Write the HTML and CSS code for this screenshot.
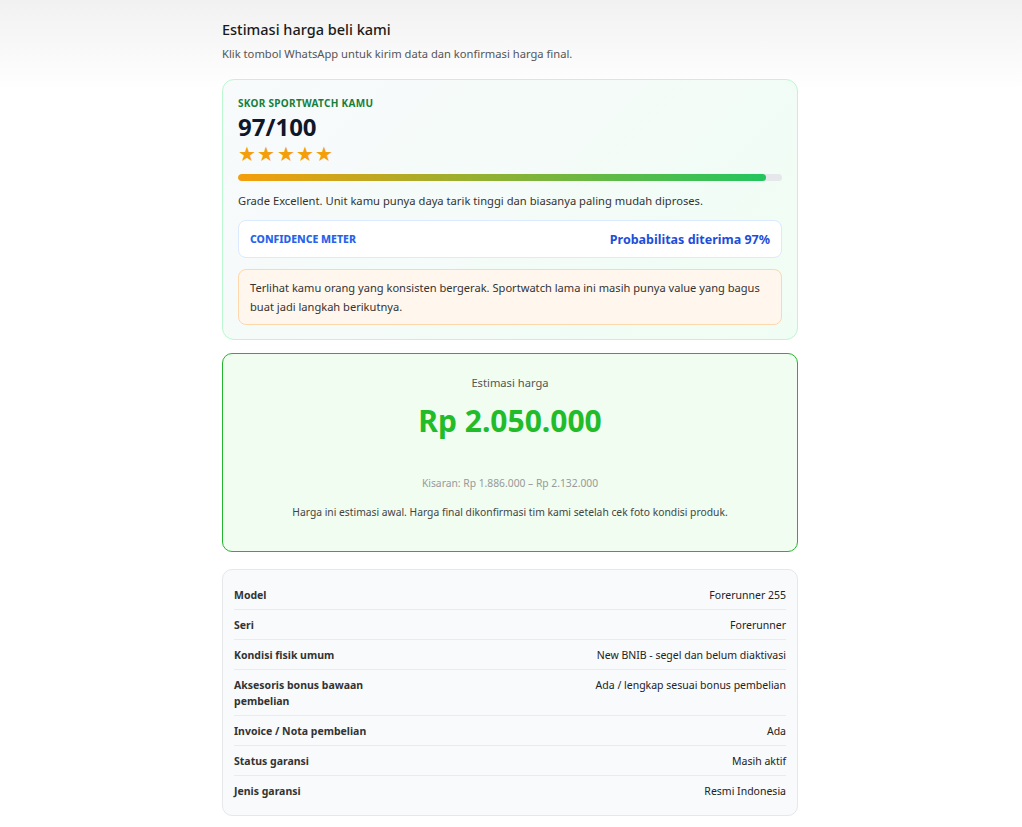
FILE: index.html
```html
<!DOCTYPE html>
<html lang="id">
<head>
    <meta charset="UTF-8">
    <meta name="viewport" content="width=device-width, initial-scale=1.0">
    <title>Estimasi harga beli kami</title>
    <link rel="stylesheet" href="styles.css">
</head>
<body>

<div class="container">
    <h1>Estimasi harga beli kami</h1>
    <p class="subtitle">Klik tombol WhatsApp untuk kirim data dan konfirmasi harga final.</p>

    <div class="score-card">
        <div class="score-label">Skor Sportwatch Kamu</div>
        <div class="score-value">97/100</div>
        <div class="stars">★★★★★</div>
        <div class="bar"><div class="bar-fill" style="width: 97%"></div></div>
        <p class="grade">Grade Excellent. Unit kamu punya daya tarik tinggi dan biasanya paling mudah diproses.</p>

        <div class="confidence">
            <span class="confidence-label">Confidence Meter</span>
            <span class="confidence-value">Probabilitas diterima 97%</span>
        </div>

        <div class="note">
            Terlihat kamu orang yang konsisten bergerak. Sportwatch lama ini masih punya value yang bagus buat jadi langkah berikutnya.
        </div>
    </div>

    <div class="price-card">
        <div class="price-label">Estimasi harga</div>
        <div class="price">Rp 2.050.000</div>
        <div class="range">Kisaran: Rp 1.886.000 – Rp 2.132.000</div>
        <div class="disclaimer">Harga ini estimasi awal. Harga final dikonfirmasi tim kami setelah cek foto kondisi produk.</div>
    </div>

    <div class="details">
        <div class="row"><span class="key">Model</span><span class="val">Forerunner 255</span></div>
        <div class="row"><span class="key">Seri</span><span class="val">Forerunner</span></div>
        <div class="row"><span class="key">Kondisi fisik umum</span><span class="val">New BNIB - segel dan belum diaktivasi</span></div>
        <div class="row"><span class="key">Aksesoris bonus bawaan pembelian</span><span class="val">Ada / lengkap sesuai bonus pembelian</span></div>
        <div class="row"><span class="key">Invoice / Nota pembelian</span><span class="val">Ada</span></div>
        <div class="row"><span class="key">Status garansi</span><span class="val">Masih aktif</span></div>
        <div class="row"><span class="key">Jenis garansi</span><span class="val">Resmi Indonesia</span></div>
    </div>
</div>

</body>
</html>
```

FILE: styles.css
```css
body {
    margin: 0;
    padding: 18px 2px 12px 0;
    font-family: "Noto Sans", "Open Sans", sans-serif;
    color: #222;
    background: linear-gradient(#f1f1f1 0, #ffffff 90px) no-repeat;
    background-color: #fff;
}
.container {
    width: 576px;
    margin: 0 auto;
}
h1 {
    margin: 0;
    font-size: 14.5px;
    font-weight: 500;
    color: #1a1a1a;
    line-height: 22px;
}
.subtitle {
    margin: 6px 0 17px;
    font-size: 11.2px;
    color: #555;
    line-height: 16px;
}
.score-card {
    border: 1px solid #bbf7d0;
    border-radius: 12px;
    background: linear-gradient(135deg, #f8fafc, #f0fdf4);
    padding: 16px 15px 14px;
}
.score-label {
    font-size: 10px;
    font-weight: 700;
    color: #15803d;
    text-transform: uppercase;
    letter-spacing: 0.3px;
    line-height: 14px;
}
.score-value {
    font-size: 24px;
    font-weight: 700;
    color: #0f172a;
    line-height: 30px;
    margin-top: 2px;
}
.stars {
    color: #f59e0b;
    font-size: 20px;
    letter-spacing: 1.3px;
    line-height: 20px;
    margin-top: 2px;
}
.bar {
    margin-top: 10px;
    height: 7px;
    background: #e5e7eb;
    border-radius: 4px;
    overflow: hidden;
}
.bar-fill {
    height: 100%;
    border-radius: 4px;
    background: linear-gradient(90deg, #f59e0b, #22c55e);
}
.grade {
    margin: 12px 0 11px;
    font-size: 11.2px;
    color: #333;
    line-height: 16px;
}
.confidence {
    display: flex;
    justify-content: space-between;
    align-items: center;
    height: 36px;
    padding: 0 11px;
    background: #fff;
    border: 1px solid #dbeafe;
    border-radius: 8px;
}
.confidence-label {
    font-size: 10.5px;
    font-weight: 800;
    color: #2563eb;
    text-transform: uppercase;
}
.confidence-value {
    font-size: 12.5px;
    font-weight: 700;
    color: #1d4ed8;
}
.note {
    margin-top: 11px;
    padding: 8px 11px;
    background: #fff7ed;
    border: 1px solid #fed7aa;
    border-radius: 8px;
    font-size: 11.1px;
    line-height: 19px;
    color: #333;
}
.price-card {
    margin-top: 13px;
    border: 1px solid #22b52f;
    border-radius: 10px;
    background: #f0fdf0;
    text-align: center;
    padding: 21px 16px 32px;
}
.price-label {
    font-size: 11.2px;
    color: #555;
    line-height: 16px;
}
.price {
    margin-top: 12px;
    font-size: 30px;
    font-weight: 700;
    color: #22bb2a;
    line-height: 36px;
}
.range {
    margin-top: 37px;
    font-size: 10.3px;
    color: #999;
    line-height: 14px;
}
.disclaimer {
    margin-top: 15px;
    font-size: 10.3px;
    color: #444;
    line-height: 14px;
}
.details {
    margin-top: 17px;
    border: 1px solid #e5e7eb;
    border-radius: 10px;
    background: #f8fafc;
    padding: 10px 11px 10px;
}
.row {
    display: flex;
    justify-content: space-between;
    align-items: flex-start;
    gap: 20px;
    padding: 7px 0 6px;
    border-bottom: 1px solid #e9ecef;
    font-size: 10.5px;
    line-height: 16px;
}
.row:last-child {
    border-bottom: none;
}
.key {
    font-weight: 700;
    color: #333;
    max-width: 140px;
}
.val {
    color: #222;
    text-align: right;
}
```
